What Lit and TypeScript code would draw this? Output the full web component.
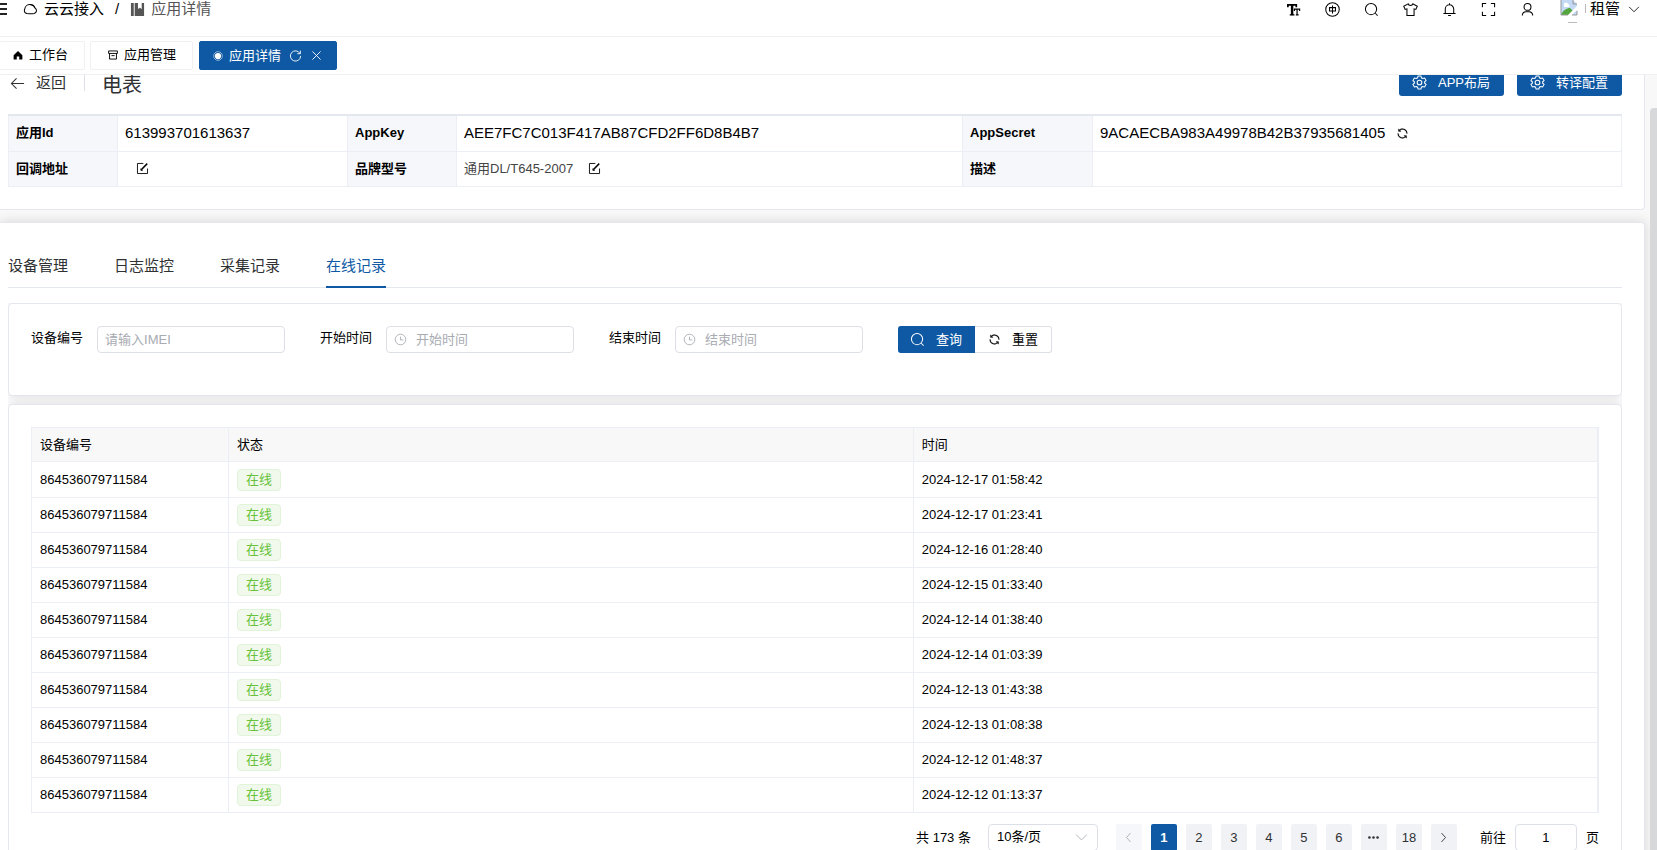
import { LitElement, html, css, svg } from "lit";
import { customElement, state } from "lit/decorators.js";

const paths: Record<string, unknown> = {
  cloud: svg`<path d="M4.200 12.300C1.800 12 .8 9.800 1.800 7.800 2.200 4.500 5 2.500 8 2.800c2.500.2 4.200 1.700 4.800 3.600 2.300 1.500 2.200 4.800-.8 5.800-2.500.5-5.500.3-7.800.1z"/>`,
  book: svg`<path fill="currentColor" stroke="none" d="M1 1h3v14H1zM5 1h3.500v6.500L10.500 6l2 1.500V1H15v14H5z"/>`,
  home: svg`<path fill="currentColor" stroke="none" d="M8 1.500 1 8.500V15h5v-4.500h4V15h5V8.500z"/>`,
  box: svg`<path d="M1 1.500h14v4H1zM2.500 5.500v9h11v-9M5.500 9h5"/>`,
  dot: svg`<circle cx="8" cy="8" r="7" stroke-width="1" opacity=".8"/><circle cx="8" cy="8" r="5" fill="currentColor" stroke="none"/>`,
  refresh: svg`<path d="M13.500 5.500A6.300 6.300 0 1 0 14.300 8.500M14 2v3.800h-3.800"/>`,
  close: svg`<path d="M3 3l10 10M13 3 3 13"/>`,
  back: svg`<path d="M15 8H1.500M7 2.500 1.500 8 7 13.500"/>`,
  font: svg`<path stroke-width="1.800" d="M2 5.500V3h9v2.500"/><path stroke-width="2.600" d="M6.500 3v11"/><path stroke-width="1.400" d="M4 13.700h5"/><path stroke-width="1.300" d="M9 9.500V7.500h5.500v2M11.800 7.500v6.500M10.500 13.800h3"/>`,
  lang: svg`<circle cx="8" cy="8" r="7.200"/><path d="M4.800 6h6.400v3.600H4.800zM8 3.800v8.400"/>`,
  search: svg`<circle cx="7.500" cy="7.500" r="6"/><path d="M12 12l2.500 2.500"/>`,
  shirt: svg`<path d="M5.500 2 .8 4.500l1.500 3.400 1.900-.6V14.500h7.600V7.300l1.900.6 1.500-3.400L10.500 2C10 4.200 6 4.200 5.500 2z"/>`,
  bell: svg`<path d="M3.500 12V7.500a4.500 4.500 0 0 1 9 0V12M1.500 12.200h13M8 3V1.200M6.500 14.500h3"/>`,
  full: svg`<path d="M1.500 5.500v-4h4M10.500 1.500h4v4M14.500 10.500v4h-4M5.500 14.500h-4v-4"/>`,
  user: svg`<circle cx="8" cy="5.200" r="3.700"/><path d="M2.500 14.500v-1A4 4 0 0 1 6 10.400h4a4 4 0 0 1 3.500 3.100v1"/>`,
  down: svg`<path d="M1.500 4.500 8 11l6.500-6.500"/>`,
  left: svg`<path d="M10.500 2.500 5.500 8l5 5.500"/>`,
  right: svg`<path d="M5.500 2.500l5 5.500-5 5.500"/>`,
  gear: svg`<circle cx="8" cy="8" r="2.500"/><path d="M6.500 1h3l.6 2 1.300.8 2.100-.5 1.500 2.600L13.500 7.300v1.400l1.500 1.400-1.500 2.600-2.100-.5-1.300.8-.6 2h-3l-.6-2-1.300-.8-2.100.5L1 10.100l1.500-1.400V7.300L1 5.900l1.500-2.600 2.100.5L5.900 3z"/>`,
  edit: svg`<path d="M9 1.800H1.800v12.400h12.400V8"/><path stroke-width="1.800" d="M6.500 9.500 13.800 2"/><path d="M6 8v2.300h2.300"/>`,
  sync: svg`<path transform="scale(.015625)" fill="currentColor" stroke="currentColor" stroke-width="16" d="M771.776 794.880A384 384 0 0 1 128 512h64a320 320 0 0 0 555.712 216.448H654.720a32 32 0 1 1 0-64h149.056a32 32 0 0 1 32 32v148.928a32 32 0 1 1-64 0v-50.560zM276.288 295.616h92.992a32 32 0 0 1 0 64H220.160a32 32 0 0 1-32-32V178.560a32 32 0 0 1 64 0v50.560A384 384 0 0 1 896.128 512h-64a320 320 0 0 0-555.776-216.384z"/>`,
  clock: svg`<circle cx="8" cy="8" r="6.500"/><path d="M8 4.500V8.500h3.500"/>`,
  more: svg`<g fill="currentColor" stroke="none"><circle cx="3" cy="8" r="1.600"/><circle cx="8" cy="8" r="1.600"/><circle cx="13" cy="8" r="1.600"/></g>`,
};

const icon = (name: string, size = "m") =>
  html`<svg class="icon ${size}" viewBox="0 0 16 16" aria-hidden="true">${paths[name]}</svg>`;

@customElement("app-root")
export class AppRoot extends LitElement {
  @state() private page = 1;

  private deviceId = "864536079711584";
  private times = [
    "2024-12-17 01:58:42",
    "2024-12-17 01:23:41",
    "2024-12-16 01:28:40",
    "2024-12-15 01:33:40",
    "2024-12-14 01:38:40",
    "2024-12-14 01:03:39",
    "2024-12-13 01:43:38",
    "2024-12-13 01:08:38",
    "2024-12-12 01:48:37",
    "2024-12-12 01:13:37",
  ];

  static styles = css`
    :host {
      display: flex;
      flex-direction: column;
      height: 100vh;
      overflow: hidden;
      background: #fff;
      color: #000;
      font: 13px/20px "Liberation Sans", "Noto Sans CJK SC", sans-serif;
      --blue: #0f59a4;
      --line: #e4e7ed;
      --soft: #ebeef5;
    }
    * { box-sizing: border-box; }
    button, input, select { font: inherit; color: inherit; margin: 0; }
    button {
      display: inline-flex;
      align-items: center;
      justify-content: center;
      padding: 0;
      border: 0;
      background: none;
      cursor: pointer;
      white-space: nowrap;
    }
    a { color: inherit; text-decoration: none; }
    .icon {
      flex: none;
      display: block;
      fill: none;
      stroke: currentColor;
      stroke-width: 1.1;
    }
    .xs { width: 10px; height: 10px; stroke-width: 1.5; }
    .s { width: 13px; height: 13px; }
    .m { width: 15px; height: 15px; }

    .top {
      flex: none;
      display: flex;
      justify-content: space-between;
      align-items: flex-start;
      height: 37px;
      border-bottom: 1px solid #f0f0f0;
      font-size: 15px;
      line-height: 18px;
    }
    .crumbs, .tools { display: flex; align-items: center; height: 18px; }
    .crumbs a { display: flex; align-items: center; gap: 6px; }
    .menu { width: 8px; height: 18px; margin-right: 15px; }
    .menu svg { display: block; }
    .slash { margin: 0 11px; }
    .crumbs .current { color: #555; }
    .tools { gap: 24px; padding-right: 17px; }
    .account { height: 18px; align-items: flex-start; }
    .avatar { display: block; margin-right: 4px; }
    .account .icon { margin-left: 8px; width: 12px; align-self: center; }

    .views {
      flex: none;
      display: flex;
      align-items: center;
      height: 38px;
      border-bottom: 1px solid #f0f0f0;
    }
    .view {
      display: flex;
      align-items: center;
      gap: 6px;
      height: 29px;
      margin-right: 5px;
      padding: 0 16px 2px 17px;
      border: 1px solid #f0f0f0;
      border-radius: 2px;
    }
    .view.first { border-left: 0; padding-left: 13px; }
    .view.on { margin-left: 1px; padding: 0 13px; background: var(--blue); border-color: var(--blue); color: #fff; }
    .view button { margin-left: 2px; }

    .scroll {
      flex: 1;
      min-height: 0;
      display: flex;
      overflow: hidden;
      background: #f8f8f8;
    }
    .body { flex: 1; min-width: 0; }
    .bar { flex: none; width: 7px; margin: 33px 0 0 5px; background: #d7d8da; border-radius: 4px 0 0 0; }
    .panel {
      background: #fff;
      border: 1px solid var(--line);
      border-left: 0;
      border-radius: 0 4px 4px 0;
      padding: 0 22px 0 8px;
    }
    .info { height: 135px; border-top: 0; border-radius: 0 0 4px 0; }
    .records { margin-top: 12px; min-height: 700px; padding-top: 26px; box-shadow: 0 0 12px rgba(0, 0, 0, 0.14); }

    .head { display: flex; align-items: flex-start; height: 39px; }
    .return { gap: 11px; height: 16px; padding-left: 2px; font-size: 15px; color: #303133; }
    .title {
      margin: 0 0 0 18px;
      padding-left: 17px;
      border-left: 1px solid #dcdfe6;
      height: 16px;
      font-size: 20px;
      line-height: 20px;
      font-weight: 400;
      color: #303133;
    }
    .actions { margin-left: auto; display: flex; gap: 13px; }
    .actions button {
      height: 21px;
      padding: 0 14px 6px 13px;
      gap: 11px;
      background: var(--blue);
      color: #fff;
      border-radius: 0 0 3px 3px;
    }

    table { border-collapse: collapse; width: 100%; table-layout: fixed; }
    th { text-align: left; }
    th, td { padding: 0 7px; border: 1px solid var(--soft); }
    .desc { border-top: 2px solid var(--line); }
    .desc tr { height: 36px; }
    .desc tr + tr { height: 35px; }
    .desc th { background: #f5f7fa; font-weight: 700; }
    .big { font-size: 15px; }
    .cell { display: flex; align-items: center; }
    .cell button { margin-left: 11px; }
    .muted { color: #444; margin-right: 4px; }
    .cl { width: 109px; }
    .c1 { width: 230px; }
    .c2 { width: 506px; }
    .c3 { width: 130px; }

    .tabs { display: flex; gap: 46px; height: 39px; border-bottom: 1px solid var(--line); font-size: 15px; color: #303133; }
    .tabs button { height: 39px; padding-bottom: 4px; border-bottom: 2px solid transparent; }
    .tabs .on { color: var(--blue); border-color: var(--blue); }

    .clip { overflow: hidden; margin-top: 15px; }
    .card {
      background: #fff;
      border: 1px solid var(--line);
      border-radius: 4px;
      box-shadow: 0 0 12px rgba(0, 0, 0, 0.14);
    }
    .search { display: flex; gap: 35px; height: 93px; padding: 22px; }
    .field { display: flex; gap: 14px; height: 27px; }
    .field label { line-height: 24px; }
    .box {
      display: flex;
      align-items: center;
      gap: 9px;
      width: 188px;
      height: 27px;
      padding: 0 7px;
      border: 1px solid #dcdfe6;
      border-radius: 4px;
      color: #a8abb2;
    }
    .box input { flex: 1; min-width: 0; border: 0; padding: 0; outline: 0; background: none; }
    .box input::placeholder { color: #a8abb2; opacity: 1; }
    .group { display: flex; height: 27px; }
    .group button { width: 77px; gap: 11px; border: 1px solid #dcdfe6; border-left: 0; border-radius: 0 3px 3px 0; }
    .group .primary { background: var(--blue); border-color: var(--blue); color: #fff; border-radius: 3px 0 0 3px; }

    .list { margin-top: 8px; padding: 22px 22px 40px; min-height: 500px; }
    .data { border-right: 2px solid var(--soft); }
    .data th, .data td { padding: 0 8px; height: 35px; }
    .data th { height: 34px; font-weight: 400; background: #f8f8f8; }
    .data tbody tr:first-child td { height: 36px; }
    .data .id { width: 197px; }
    .tag {
      display: inline-block;
      vertical-align: middle;
      height: 22px;
      padding: 0 8px;
      line-height: 20px;
      color: #67c23a;
      background: #f0f9eb;
      border: 1px solid #e1f3d8;
      border-radius: 4px;
    }

    .pager { display: flex; justify-content: flex-end; align-items: center; margin-top: 11px; height: 27px; }
    .size {
      display: flex;
      align-items: center;
      width: 110px;
      height: 27px;
      margin: 0 18px 0 17px;
      padding-right: 9px;
      border: 1px solid #dcdfe6;
      border-radius: 4px;
      color: #a8abb2;
    }
    .size select { flex: 1; height: 25px; padding: 0 0 2px 8px; appearance: none; border: 0; background: none; color: #000; outline: 0; }
    .pages { display: flex; gap: 9px; }
    .pages button { width: 26px; height: 27px; background: #f0f2f5; border-radius: 2px; color: #303133; }
    .pages .on { background: var(--blue); color: #fff; font-weight: 700; }
    .pages button:disabled { background: #f5f7fa; color: #a8abb2; }
    .jump { display: flex; align-items: center; gap: 9px; margin-left: 23px; }
    .jump input { width: 62px; height: 27px; text-align: center; border: 1px solid #dcdfe6; border-radius: 4px; outline: 0; }
  `;

  private pageButton(n: number) {
    return html`<button class=${this.page === n ? "on" : ""} @click=${() => (this.page = n)}>${n}</button>`;
  }

  render() {
    return html`
      <header class="top">
        <nav class="crumbs">
          <button class="menu" aria-label="菜单">
            <svg width="8" height="18" viewBox="0 0 8 18"><path stroke="#222" stroke-width="2" d="M0 4h7M0 9h7M0 14h7" /></svg>
          </button>
          <a href="#">${icon("cloud")}<span>云云接入</span></a>
          <span class="slash">/</span>
          <a href="#" class="current">${icon("book")}<span>应用详情</span></a>
        </nav>
        <div class="tools">
          <button aria-label="字号">${icon("font")}</button>
          <button aria-label="语言">${icon("lang")}</button>
          <button aria-label="搜索">${icon("search")}</button>
          <button aria-label="主题">${icon("shirt")}</button>
          <button aria-label="通知">${icon("bell")}</button>
          <button aria-label="全屏">${icon("full")}</button>
          <button aria-label="用户">${icon("user")}</button>
          <button class="account">
            <svg class="avatar" width="27" height="24" viewBox="0 0 27 24">
              <path fill="#c3d9f5" d="M2 0h12l4 4v11H2z" />
              <path fill="#fff" d="M5 5a2 2 0 0 1 4-1 2 2 0 0 1 1 3H5z" />
              <path fill="#55a63f" d="M2 15c2-5 6-7 9-7l3 3-4 4z" />
              <path fill="#fff" d="M19 5 9 15h4l6-6z" />
              <path fill="none" stroke="#999" d="M2 0v15M2 15h7M13 15h5v-4M14 0v4h4" />
              <path fill="none" stroke="#bbb" d="M26.500 4v9M9 22.500h9" />
            </svg>
            <span>租管</span>${icon("down")}
          </button>
        </div>
      </header>

      <nav class="views">
        <a class="view first" href="#">${icon("home", "xs")}<span>工作台</span></a>
        <a class="view" href="#">${icon("box", "xs")}<span>应用管理</span></a>
        <div class="view on">
          ${icon("dot", "xs")}<span>应用详情</span>
          <button aria-label="刷新">${icon("refresh", "s")}</button>
          <button aria-label="关闭">${icon("close", "s")}</button>
        </div>
      </nav>

      <main class="scroll">
        <div class="body">
          <section class="panel info">
            <div class="head">
              <button class="return">${icon("back")}<span>返回</span></button>
              <h1 class="title">电表</h1>
              <div class="actions">
                <button>${icon("gear")}<span>APP布局</span></button>
                <button>${icon("gear")}<span>转译配置</span></button>
              </div>
            </div>
            <table class="desc">
              <colgroup><col class="cl" /><col class="c1" /><col class="cl" /><col class="c2" /><col class="c3" /><col /></colgroup>
              <tbody>
                <tr>
                  <th>应用Id</th>
                  <td class="big">613993701613637</td>
                  <th>AppKey</th>
                  <td class="big">AEE7FC7C013F417AB87CFD2FF6D8B4B7</td>
                  <th>AppSecret</th>
                  <td class="big">
                    <div class="cell">9ACAECBA983A49978B42B37935681405<button aria-label="重置密钥">${icon("sync", "s")}</button></div>
                  </td>
                </tr>
                <tr>
                  <th>回调地址</th>
                  <td><div class="cell"><button aria-label="编辑回调地址">${icon("edit", "s")}</button></div></td>
                  <th>品牌型号</th>
                  <td><div class="cell"><span class="muted">通用DL/T645-2007</span><button aria-label="编辑品牌型号">${icon("edit", "s")}</button></div></td>
                  <th>描述</th>
                  <td></td>
                </tr>
              </tbody>
            </table>
          </section>

          <section class="panel records">
            <div class="tabs" role="tablist">
              <button role="tab">设备管理</button>
              <button role="tab">日志监控</button>
              <button role="tab">采集记录</button>
              <button role="tab" class="on" aria-selected="true">在线记录</button>
            </div>
            <div class="clip">
              <form class="card search" @submit=${(e: Event) => e.preventDefault()}>
                <div class="field">
                  <label for="imei">设备编号</label>
                  <div class="box"><input id="imei" placeholder="请输入IMEI" /></div>
                </div>
                <div class="field">
                  <label for="start">开始时间</label>
                  <div class="box">${icon("clock", "s")}<input id="start" placeholder="开始时间" /></div>
                </div>
                <div class="field">
                  <label for="end">结束时间</label>
                  <div class="box">${icon("clock", "s")}<input id="end" placeholder="结束时间" /></div>
                </div>
                <div class="group">
                  <button class="primary" type="submit">${icon("search")}<span>查询</span></button>
                  <button type="reset">${icon("sync", "s")}<span>重置</span></button>
                </div>
              </form>

              <div class="card list">
                <table class="data">
                  <colgroup><col class="id" /><col /><col /></colgroup>
                  <thead>
                    <tr><th>设备编号</th><th>状态</th><th>时间</th></tr>
                  </thead>
                  <tbody>
                    ${this.times.map(
                      (t) => html`<tr><td>${this.deviceId}</td><td><span class="tag">在线</span></td><td>${t}</td></tr>`
                    )}
                  </tbody>
                </table>
                <div class="pager">
                  <span>共 173 条</span>
                  <div class="size">
                    <select aria-label="每页条数"><option>10条/页</option></select>${icon("down", "s")}
                  </div>
                  <div class="pages">
                    <button disabled aria-label="上一页">${icon("left", "s")}</button>
                    ${[1, 2, 3, 4, 5, 6].map((n) => this.pageButton(n))}
                    <button aria-label="更多">${icon("more", "s")}</button>
                    ${this.pageButton(18)}
                    <button aria-label="下一页">${icon("right", "s")}</button>
                  </div>
                  <div class="jump">
                    <label for="goto">前往</label><input id="goto" .value=${String(this.page)} /><span>页</span>
                  </div>
                </div>
              </div>
            </div>
          </section>
        </div>
        <div class="bar"></div>
      </main>
    `;
  }
}
